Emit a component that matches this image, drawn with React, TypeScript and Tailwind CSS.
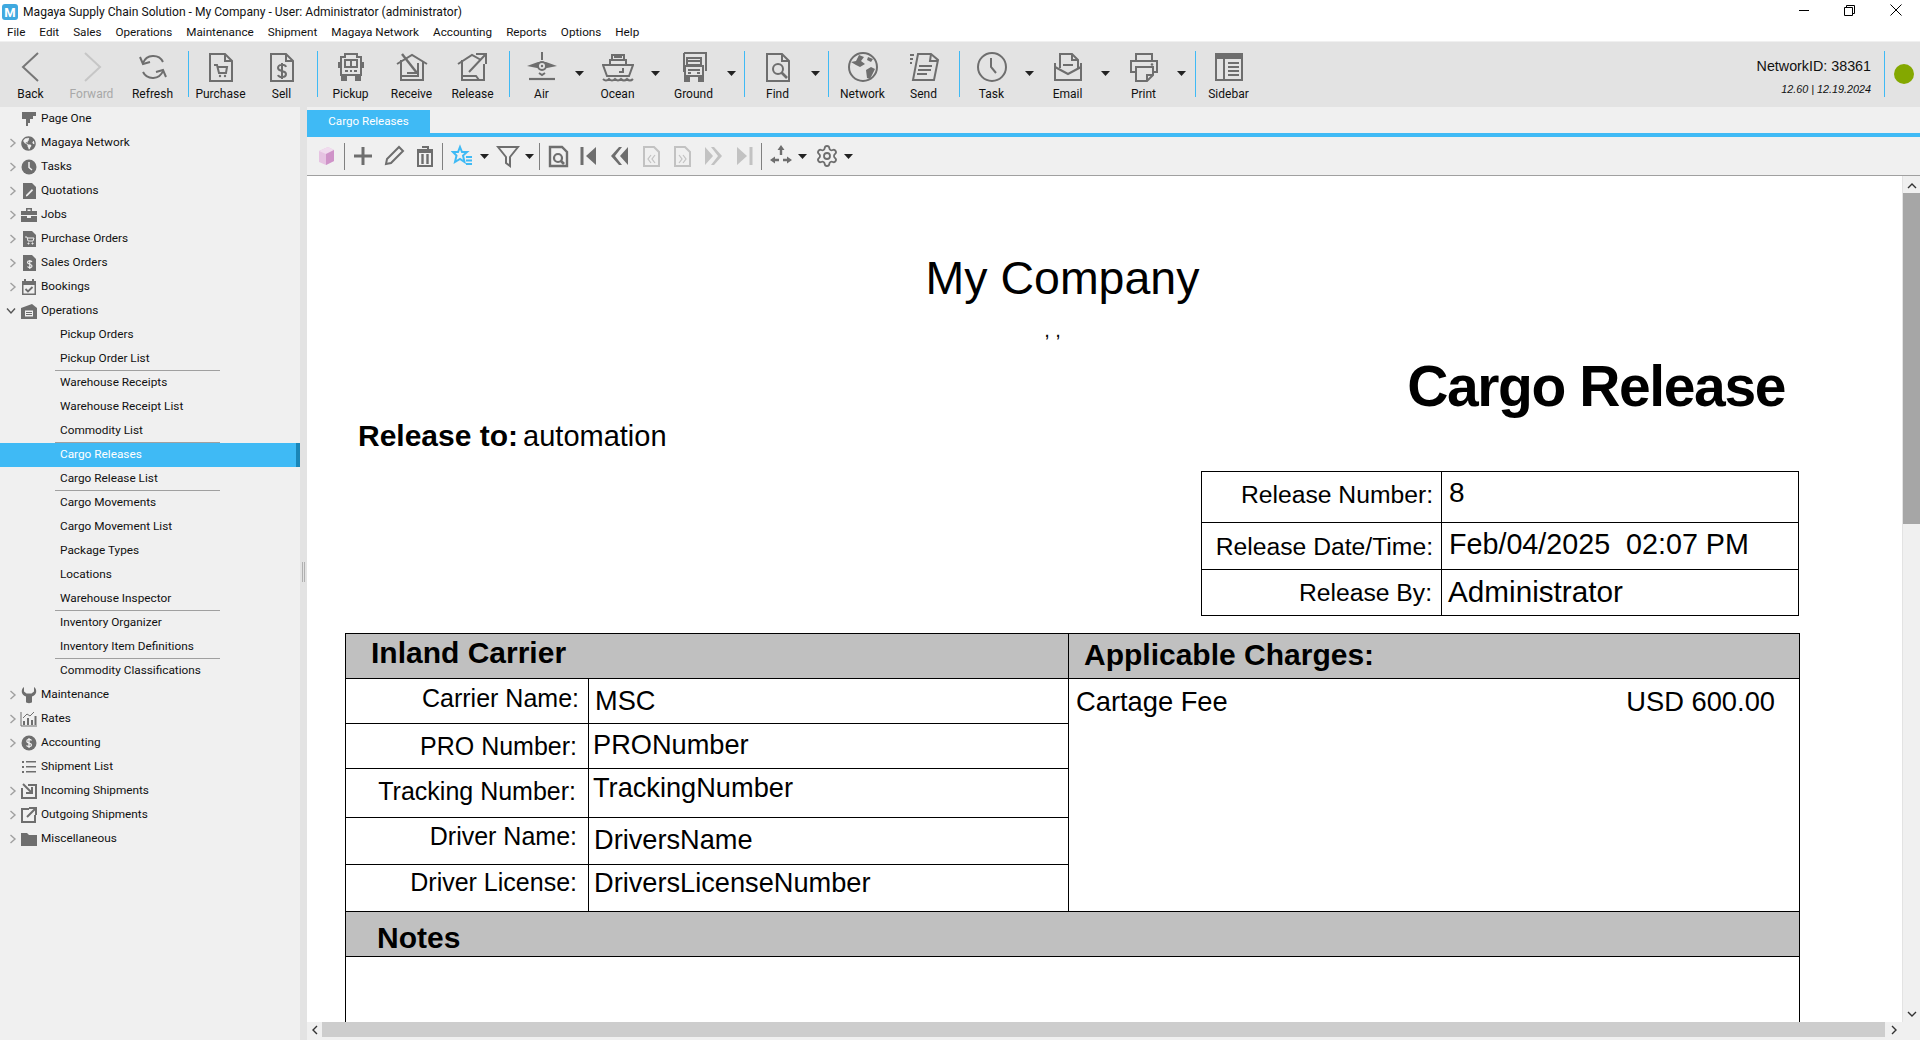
import React from 'react';
import { Settings } from 'lucide-react';
import { FaGlobeAmericas } from 'react-icons/fa';

const GRAY = '#6e6e6e';

function Big({ children, color = GRAY }: { children: React.ReactNode; color?: string }) {
  return (
    <svg width="32" height="32" viewBox="0 0 32 32" fill="none" stroke={color} strokeWidth="2" strokeLinejoin="miter">
      {children}
    </svg>
  );
}

const Page = () => <path d="M5 3H20L27 10V30H5ZM20 3V10H27" />;

const bigIcons: Record<string, React.ReactNode> = {
  back: <Big color="#777"><path d="M23 2L8 16L23 30" /></Big>,
  forward: <Big color="#c6c6c6"><path d="M9 2L24 16L9 30" /></Big>,
  refresh: (
    <Big>
      <path d="M6 12A11 11 0 0 1 26 11" />
      <path d="M3 6L6 13L13 11" />
      <path d="M26 20A11 11 0 0 1 6 21" />
      <path d="M29 26L26 19L19 21" />
    </Big>
  ),
  purchase: (
    <Big>
      <Page />
      <path d="M9 14H12L14 22H21L22 16H13" />
      <circle cx="15" cy="25" r="1.2" fill={GRAY} stroke="none" />
      <circle cx="20" cy="25" r="1.2" fill={GRAY} stroke="none" />
    </Big>
  ),
  sell: (
    <Big>
      <Page />
      <path d="M20 16C19 13 12 13 12 17C12 21 20 19 20 23C20 27 13 27 12 24M16 12V28" />
    </Big>
  ),
  pickup: (
    <Big>
      <path d="M10 3H22V6H26V24H6V6H10Z" />
      <path d="M10 9H22V16H10ZM16 9V16" />
      <path d="M10 20H13M15 20H17M19 20H22" />
      <path d="M7 25H11V29H7ZM21 25H25V29H21Z" fill={GRAY} />
      <path d="M3 11H5V17H3ZM27 11H29V17H27Z" fill={GRAY} stroke="none" />
    </Big>
  ),
  receive: (
    <Big>
      <path d="M1 13L16 4L31 13" />
      <path d="M5 9V29H27V10" />
      <path d="M6 25H22V14" />
      <path d="M6 3L21 22" strokeWidth="2.4" />
      <path d="M11 22H22V12" />
    </Big>
  ),
  release: (
    <Big>
      <path d="M1 13L15 4L24 9" />
      <path d="M5 9V29H27V13" />
      <path d="M5 25H19L22 29" />
      <path d="M12 21L28 4M19 3H29V13" />
    </Big>
  ),
  air: (
    <Big>
      <path d="M16 1V9" />
      <path d="M1 15L12 11H20L31 15L21 17H11Z" fill={GRAY} stroke="none" />
      <circle cx="16" cy="15" r="4" fill="#e3e3e3" />
      <circle cx="16" cy="15" r="1.2" fill={GRAY} stroke="none" />
      <path d="M13 22L16 24L19 22" />
      <path d="M3 28H29" strokeWidth="2.2" />
    </Big>
  ),
  ocean: (
    <Big>
      <path d="M10 9V4H22V9M8 14V9H24V14" />
      <path d="M1 14H31L27 25H5Z" />
      <path d="M12 6H20" />
      <path d="M21 17V21H17" />
      <path d="M1 28C3 30 5 30 7 28C9 30 11 30 13 28C15 30 17 30 19 28C21 30 23 30 25 28C27 30 29 30 31 28" />
    </Big>
  ),
  ground: (
    <Big>
      <path d="M6 2H28V20M6 2V21" />
      <path d="M9 7H23V14H9ZM9 10H23" />
      <path d="M7 15H25V25H7Z" />
      <path d="M10 19H22M10 22H13M19 22H22" />
      <path d="M7 26H11V30H7ZM21 26H25V30H21Z" fill={GRAY} />
    </Big>
  ),
  find: (
    <Big>
      <Page />
      <circle cx="16" cy="18" r="5" />
      <path d="M19.5 21.5L25 27" strokeWidth="2.6" />
    </Big>
  ),
  network: (
    <Big>
      <circle cx="16" cy="16" r="14" />
      <path d="M4 11L9 10L12 4L17 6L14 10L18 13L13 16L9 14ZM19 19L24 16L28 18L23 28L20 27Z" fill={GRAY} stroke="none" />
      <path d="M21 6L26 8L24 11L20 9Z" fill={GRAY} stroke="none" />
    </Big>
  ),
  send: (
    <Big>
      <path d="M10 3H23L30 9L26 29H5Z" />
      <path d="M23 3L22 10H30" />
      <path d="M11 15H24M10 19H23M9 23H19" />
      <path d="M2 4H6M2 8H5M2 12H4" />
    </Big>
  ),
  task: (
    <Big>
      <circle cx="16" cy="16" r="14" />
      <path d="M15 7V16L20 22" />
    </Big>
  ),
  email: (
    <Big>
      <path d="M8 17V3H20L26 9V17" />
      <path d="M20 3V9H26" />
      <path d="M3 12V29H29V12" />
      <path d="M3 16L16 23L29 16" />
      <path d="M11 14H21" />
    </Big>
  ),
  print: (
    <Big>
      <path d="M8 10V3H24V10" />
      <path d="M8 21H3V10H29V21H25" />
      <path d="M8 16H25V24L19 30H8Z" />
      <path d="M19 30V24H25" />
      <circle cx="24" cy="13.5" r="1.3" fill={GRAY} stroke="none" />
    </Big>
  ),
  sidebar: (
    <Big>
      <path d="M3 3H29V29H3Z" />
      <path d="M3 3H29V7H3Z" fill={GRAY} />
      <path d="M11 7V29M15 12H26M15 16H26M15 20H26M15 24H26" />
    </Big>
  ),
};

function Small({ children }: { children: React.ReactNode }) {
  return (
    <svg width="18" height="18" viewBox="0 0 18 18" fill={GRAY} className="shrink-0">
      {children}
    </svg>
  );
}

const sideIcons: Record<string, React.ReactNode> = {
  page: <Small><path d="M2 2H16V6H13V9H10V13H8V16H6V9H2Z" /></Small>,
  globe: <FaGlobeAmericas size={15} color={GRAY} className="mx-[1px]" />,
  clock: (
    <Small>
      <circle cx="9" cy="9" r="7.5" />
      <path d="M9 4V9.5L12 12" stroke="#f0f0f0" strokeWidth="1.5" fill="none" />
    </Small>
  ),
  quote: (
    <Small>
      <path d="M3 1H12L16 5V17H3Z" />
      <path d="M6 13L12 7L13 8.5L7.5 14L6 14.5Z" fill="#f0f0f0" />
    </Small>
  ),
  jobs: (
    <Small>
      <path d="M6 5V2H12V5H17V9H1V5ZM7.5 3.5V5H10.5V3.5ZM1 10H7V12H11V10H17V16H1Z" fillRule="evenodd" />
    </Small>
  ),
  po: (
    <Small>
      <path d="M3 1H12L16 5V17H3Z" />
      <path d="M5 7H7L8 11H13L14 8H7.5M8 13H9V14H8ZM12 13H13V14H12Z" fill="none" stroke="#f0f0f0" />
    </Small>
  ),
  so: (
    <Small>
      <path d="M3 1H12L16 5V17H3Z" />
      <path d="M12 8C11 6.5 7.5 6.5 7.5 8.5C7.5 10.5 12 10 12 12C12 14 8.5 14 7.5 12.5M9.8 6V15" fill="none" stroke="#f0f0f0" strokeWidth="1.2" />
    </Small>
  ),
  book: (
    <Small>
      <path d="M2 3H4V1H6V3H12V1H14V3H16V17H2Z" />
      <path d="M3.5 7H14.5V15.5H3.5Z" fill="#f0f0f0" />
      <path d="M5.5 11L8 13.5L12.5 9" fill="none" stroke={GRAY} strokeWidth="1.8" />
    </Small>
  ),
  ops: (
    <Small>
      <path d="M1 6L12 2L17 6V17H1Z" />
      <path d="M5 8.5H13V14.5H5Z" fill="#f0f0f0" />
      <path d="M6 10.5H12M6 12.5H12" stroke={GRAY} fill="none" />
    </Small>
  ),
  wrench: (
    <Small>
      <path d="M4 1C0.5 3.5 1 9 6 10.5V16C6 17.5 12 17.5 12 16V10.5C17 9 17.5 3.5 14 1V5.5L11.5 7.5H6.5L4 5.5Z" />
    </Small>
  ),
  rates: (
    <Small>
      <path d="M1 2V16H17" fill="none" stroke={GRAY} />
      <path d="M3 11H5V15H3ZM7 8H9V15H7ZM11 10H13V15H11ZM14.5 6H16.5V15H14.5Z" />
      <path d="M3 8L7 4L10 6L14 2" fill="none" stroke={GRAY} />
    </Small>
  ),
  money: (
    <Small>
      <circle cx="9" cy="9" r="7.5" />
      <path d="M11.5 6.5C10.5 5 6.8 5 6.8 7.3C6.8 9.5 11.5 8.7 11.5 11C11.5 13 7.5 13 6.5 11.5M9 4V14" fill="none" stroke="#f0f0f0" strokeWidth="1.3" />
    </Small>
  ),
  list: (
    <Small>
      <path d="M2 3H4V5H2ZM6 3H16V4.5H6ZM2 8H4V10H2ZM6 8H16V9.5H6ZM2 13H4V15H2ZM6 13H16V14.5H6Z" />
    </Small>
  ),
  incoming: (
    <Small>
      <path d="M2 6V16H16V3H8" fill="none" stroke={GRAY} strokeWidth="2" />
      <path d="M3 2L11 10M6 11H12V5" fill="none" stroke={GRAY} strokeWidth="2" />
    </Small>
  ),
  outgoing: (
    <Small>
      <path d="M9 3H2V16H15V9" fill="none" stroke={GRAY} strokeWidth="2" />
      <path d="M7 11L15 3M9 2H16V9" fill="none" stroke={GRAY} strokeWidth="2" />
    </Small>
  ),
  folder: <Small><path d="M1 3H7L9 5H17V16H1Z" /></Small>,
};

const tools = [
  { t: 'b', icon: 'back', label: 'Back' },
  { t: 'b', icon: 'forward', label: 'Forward', dim: true },
  { t: 'b', icon: 'refresh', label: 'Refresh' },
  { t: 's', cls: 'ml-[5px] mr-[1px]' },
  { t: 'b', icon: 'purchase', label: 'Purchase' },
  { t: 'b', icon: 'sell', label: 'Sell' },
  { t: 's', cls: 'ml-[5px] mr-[2px]' },
  { t: 'b', icon: 'pickup', label: 'Pickup' },
  { t: 'b', icon: 'receive', label: 'Receive' },
  { t: 'b', icon: 'release', label: 'Release' },
  { t: 's', cls: 'ml-[6px] mr-[1px]' },
  { t: 'b', icon: 'air', label: 'Air' },
  { t: 'c' },
  { t: 'b', icon: 'ocean', label: 'Ocean' },
  { t: 'c' },
  { t: 'b', icon: 'ground', label: 'Ground' },
  { t: 'c' },
  { t: 's', cls: 'ml-[5px] mr-[2px]' },
  { t: 'b', icon: 'find', label: 'Find' },
  { t: 'c' },
  { t: 's', cls: 'ml-[5px] mr-[3px]' },
  { t: 'b', icon: 'network', label: 'Network' },
  { t: 'b', icon: 'send', label: 'Send' },
  { t: 's', cls: 'ml-[5px] mr-[1px]' },
  { t: 'b', icon: 'task', label: 'Task' },
  { t: 'c' },
  { t: 'b', icon: 'email', label: 'Email' },
  { t: 'c' },
  { t: 'b', icon: 'print', label: 'Print' },
  { t: 'c' },
  { t: 's', cls: 'ml-[6px] mr-[2px]' },
  { t: 'b', icon: 'sidebar', label: 'Sidebar' },
];

const tree = [
  { label: 'Page One', icon: 'page' },
  { label: 'Magaya Network', icon: 'globe', arrow: 'closed' },
  { label: 'Tasks', icon: 'clock', arrow: 'closed' },
  { label: 'Quotations', icon: 'quote', arrow: 'closed' },
  { label: 'Jobs', icon: 'jobs', arrow: 'closed' },
  { label: 'Purchase Orders', icon: 'po', arrow: 'closed' },
  { label: 'Sales Orders', icon: 'so', arrow: 'closed' },
  { label: 'Bookings', icon: 'book', arrow: 'closed' },
  { label: 'Operations', icon: 'ops', arrow: 'open' },
  { label: 'Pickup Orders' },
  { label: 'Pickup Order List', line: true },
  { label: 'Warehouse Receipts' },
  { label: 'Warehouse Receipt List' },
  { label: 'Commodity List', line: true },
  { label: 'Cargo Releases', selected: true },
  { label: 'Cargo Release List', line: true },
  { label: 'Cargo Movements' },
  { label: 'Cargo Movement List' },
  { label: 'Package Types' },
  { label: 'Locations' },
  { label: 'Warehouse Inspector', line: true },
  { label: 'Inventory Organizer' },
  { label: 'Inventory Item Definitions', line: true },
  { label: 'Commodity Classifications' },
  { label: 'Maintenance', icon: 'wrench', arrow: 'closed' },
  { label: 'Rates', icon: 'rates', arrow: 'closed' },
  { label: 'Accounting', icon: 'money', arrow: 'closed' },
  { label: 'Shipment List', icon: 'list' },
  { label: 'Incoming Shipments', icon: 'incoming', arrow: 'closed' },
  { label: 'Outgoing Shipments', icon: 'outgoing', arrow: 'closed' },
  { label: 'Miscellaneous', icon: 'folder', arrow: 'closed' },
];

const menus = ['File', 'Edit', 'Sales', 'Operations', 'Maintenance', 'Shipment', 'Magaya Network', 'Accounting', 'Reports', 'Options', 'Help'];

function Caret({ className = '' }: { className?: string }) {
  return (
    <svg width="9" height="5" viewBox="0 0 9 5" className={className}>
      <path d="M0 0H9L4.5 5Z" fill="#222" />
    </svg>
  );
}

function Toolbar() {
  return (
    <div className="flex h-[65px] bg-[#e3e3e3] items-start">
      {tools.map((item, i) => {
        if (item.t === 's') return <div key={i} className={`w-px h-[46px] mt-[9px] bg-[#3fbaf5] ${item.cls}`} />;
        if (item.t === 'c')
          return (
            <div key={i} className="w-[15px] flex justify-center mt-[29px]">
              <Caret />
            </div>
          );
        return (
          <div key={i} className="w-[61px] flex flex-col items-center pt-[9px]">
            {bigIcons[item.icon as string]}
            <span className={`mt-[3px] text-[12px] leading-[16px] ${item.dim ? 'text-[#a8a8a8]' : 'text-[#111]'}`}>{item.label}</span>
          </div>
        );
      })}
      <div className="ml-auto flex flex-col items-end mr-[13px] font-['Liberation_Sans',Arial,sans-serif] text-[#111]">
        <span className="text-[14.3px] leading-[16px] mt-[16px]">NetworkID: 38361</span>
        <span className="text-[10.8px] leading-[14px] italic mt-[8px]">12.60 | 12.19.2024</span>
      </div>
      <div className="w-px h-[46px] mt-[9px] bg-[#3fbaf5]" />
      <div className="w-[20px] h-[20px] rounded-full bg-[#84a800] mt-[22px] ml-[9px] mr-[6px]" />
    </div>
  );
}

function Sidebar() {
  return (
    <div className="w-[300px] shrink-0 bg-[#f0f0f0] text-[11.8px] text-[#111]">
      {tree.map((row) => (
        <div key={row.label} className={`relative h-[24px] flex items-center ${row.selected ? 'bg-[#3fbaf5] text-white border-r-4 border-[#1a86b8]' : ''}`}>
          {row.icon ? (
            <>
              <div className="w-[18px] flex justify-end pr-[1px] shrink-0">
                {row.arrow === 'closed' && (
                  <svg width="8" height="10" viewBox="0 0 8 10" fill="none" stroke="#a0a0a0" strokeWidth="1.4">
                    <path d="M1.5 1L6 5L1.5 9" />
                  </svg>
                )}
                {row.arrow === 'open' && (
                  <svg width="10" height="8" viewBox="0 0 10 8" fill="none" stroke="#555" strokeWidth="1.4" className="mr-[1px]">
                    <path d="M1 1.5L5 6L9 1.5" />
                  </svg>
                )}
              </div>
              <div className="w-[21px] mr-[2px] flex justify-center shrink-0">{sideIcons[row.icon]}</div>
              <span>{row.label}</span>
            </>
          ) : (
            <span className="pl-[60px]">{row.label}</span>
          )}
          {row.line && <div className="absolute left-[55px] bottom-0 w-[165px] h-px bg-[#a0a0a0]" />}
        </div>
      ))}
    </div>
  );
}

function Tool({ children, faded }: { children: React.ReactNode; faded?: boolean }) {
  return (
    <div className={`w-[31px] flex justify-center ${faded ? 'opacity-35' : ''}`}>
      <svg width="24" height="24" viewBox="0 0 24 24" fill="none" stroke={GRAY} strokeWidth="2">
        {children}
      </svg>
    </div>
  );
}

function ActionBar() {
  const sep = 'w-px h-[27px] bg-[#808080]';
  const caret = 'w-[12px] flex justify-center';
  return (
    <div className="flex items-center h-[38px] bg-[#f0f0f0] border-b border-[#a0a0a0] box-content pl-[3px]">
      <Tool>
        <path d="M5 7L14 3L20 6V17L12 21L5 18Z" fill="#e6c3e2" stroke="none" />
        <path d="M5 7L12 10L20 6L14 3Z" fill="#f0dcee" stroke="none" />
        <path d="M12 10V21L20 17V6Z" fill="#cf93c8" stroke="none" />
      </Tool>
      <div className={`${sep} ml-[3px] mr-[2px]`} />
      <Tool><path d="M12 3V21M3 12H21" strokeWidth="3" /></Tool>
      <Tool><path d="M4 20L5 15L17 3L21 7L9 19Z" /></Tool>
      <Tool>
        <path d="M4 6H20M9 3H15V6" strokeWidth="2" />
        <path d="M5 8H19V22H5Z" />
        <path d="M9.5 10V20M14.5 10V20" strokeWidth="2.4" />
      </Tool>
      <div className={`${sep} ml-[2px] mr-[4px]`} />
      <Tool>
        <path d="M9 3L11 8H16L12 11.5L13.5 18L9 15L4 18L5.5 11.5L2 8H7Z" stroke="#3fbaf5" />
        <path d="M15 13H21M15 16.5H21M15 20H21" stroke="#3fbaf5" />
      </Tool>
      <div className={caret}><Caret /></div>
      <div className="w-[2px]" />
      <Tool><path d="M2 3H22L14 13V22L10 19V13Z" /></Tool>
      <div className={caret}><Caret /></div>
      <div className={`${sep} ml-[4px] mr-[2px]`} />
      <Tool>
        <path d="M4 3H16L21 8V22H4Z" strokeWidth="2.4" />
        <circle cx="12" cy="14" r="4" strokeWidth="2.2" />
        <path d="M15 17L18 20" strokeWidth="2.6" />
      </Tool>
      <Tool><path d="M5 3V21" strokeWidth="3" /><path d="M19 3L9 12L19 21Z" fill={GRAY} stroke="none" /></Tool>
      <Tool><path d="M11 3L3 12L11 21H14L7 12L14 3ZM20 3L12 12L20 21V3Z" fill={GRAY} stroke="none" /></Tool>
      <Tool faded>
        <path d="M5 3H15L20 8V22H5Z" />
        <path d="M12 11L9 15L12 19M16 11L13 15L16 19" strokeWidth="1.2" />
      </Tool>
      <Tool faded>
        <path d="M5 3H15L20 8V22H5Z" />
        <path d="M9 11L12 15L9 19M13 11L16 15L13 19" strokeWidth="1.2" />
      </Tool>
      <Tool faded><path d="M13 3L21 12L13 21H10L17 12L10 3ZM4 3L12 12L4 21V3Z" fill={GRAY} stroke="none" /></Tool>
      <Tool faded><path d="M19 3V21" strokeWidth="3" /><path d="M5 3L15 12L5 21Z" fill={GRAY} stroke="none" /></Tool>
      <div className={`${sep} ml-[2px] mr-[3px]`} />
      <Tool>
        <path d="M12 4V11M5 16H10M14 16H19" strokeWidth="2.4" />
        <path d="M12 1L15.5 6H8.5ZM1 16L6 12.5V19.5ZM23 16L18 12.5V19.5Z" fill={GRAY} stroke="none" />
      </Tool>
      <div className={caret}><Caret /></div>
      <div className="w-[3px]" />
      <div className="w-[31px] flex justify-center"><Settings size={24} color={GRAY} strokeWidth={1.8} /></div>
      <div className={caret}><Caret /></div>
    </div>
  );
}

function ReleaseRow({ label, value, h, labelCls, valueCls, last }: { label: string; value: string; h: string; labelCls: string; valueCls: string; last?: boolean }) {
  return (
    <div className={`flex ${h} ${last ? '' : 'border-b border-black'}`}>
      <div className={`w-[240px] shrink-0 border-r border-black text-right text-[24.7px] leading-none ${labelCls}`}>{label}</div>
      <div className={`flex-1 leading-none whitespace-pre ${valueCls}`}>{value}</div>
    </div>
  );
}

function CarrierRow({ label, value, h, labelCls, valueCls, last }: { label: string; value: string; h: string; labelCls: string; valueCls: string; last?: boolean }) {
  return (
    <div className={`flex ${h} ${last ? '' : 'border-b border-black'}`}>
      <div className={`w-[243px] shrink-0 border-r border-black text-right text-[25px] leading-none ${labelCls}`}>{label}</div>
      <div className={`flex-1 text-[27.2px] leading-none ${valueCls}`}>{value}</div>
    </div>
  );
}

function Report() {
  return (
    <div className="w-[1455px] ml-[38px] font-['Liberation_Sans',Arial,sans-serif] text-black">
      <div className="pt-[79px] pr-[20px] text-center text-[46.5px] leading-none">My Company</div>
      <div className="mt-[18px] pr-[40px] text-center text-[20px] leading-none">, ,</div>
      <div className="mt-[18px] pr-[15px] text-right text-[57px] leading-none font-bold tracking-[-1.4px]">Cargo Release</div>
      <div className="mt-[6px] pl-[13px] flex items-baseline gap-[5px]">
        <span className="text-[30px] leading-none font-bold">Release to:</span>
        <span className="text-[29px] leading-none">automation</span>
      </div>
      <div className="mt-[20px] ml-[856px] w-[598px] border border-black">
        <ReleaseRow label="Release Number:" value="8" h="h-[51px]" labelCls="pt-[11px] pr-[8px]" valueCls="text-[28px] pt-[7px] pl-[7px]" />
        <ReleaseRow label="Release Date/Time:" value="Feb/04/2025  02:07 PM" h="h-[47px]" labelCls="pt-[12px] pr-[8px]" valueCls="text-[28.7px] pt-[7px] pl-[7px]" />
        <ReleaseRow label="Release By:" value="Administrator" h="h-[45px]" labelCls="pt-[11px] pr-[9px]" valueCls="text-[29.7px] pt-[7px] pl-[6px]" last />
      </div>
      <div className="mt-[17px] border-x border-t border-black">
        <div className="flex h-[45px] bg-[#c0c0c0] border-b border-black text-[30px] leading-none font-bold">
          <div className="w-[723px] shrink-0 border-r border-black pl-[25px] pt-[4px]">Inland Carrier</div>
          <div className="flex-1 pl-[15px] pt-[6px]">Applicable Charges:</div>
        </div>
        <div className="flex border-b border-black">
          <div className="w-[723px] shrink-0 border-r border-black">
            <CarrierRow label="Carrier Name:" value="MSC" h="h-[45px]" labelCls="pt-[7px] pr-[9px]" valueCls="pt-[8px] pl-[6px]" />
            <CarrierRow label="PRO Number:" value="PRONumber" h="h-[45px]" labelCls="pt-[10px] pr-[11px]" valueCls="pt-[7px] pl-[4px]" />
            <CarrierRow label="Tracking Number:" value="TrackingNumber" h="h-[49px]" labelCls="pt-[10px] pr-[12px]" valueCls="pt-[5px] pl-[4px]" />
            <CarrierRow label="Driver Name:" value="DriversName" h="h-[47px]" labelCls="pt-[6px] pr-[11px]" valueCls="pt-[8px] pl-[5px]" />
            <CarrierRow label="Driver License:" value="DriversLicenseNumber" h="h-[46px]" labelCls="pt-[5px] pr-[11px]" valueCls="pt-[4px] pl-[5px]" last />
          </div>
          <div className="flex-1 flex justify-between text-[27.3px] leading-none pt-[9px] pl-[7px] pr-[24px]">
            <span>Cartage Fee</span>
            <span>USD 600.00</span>
          </div>
        </div>
        <div className="h-[45px] bg-[#c0c0c0] border-b border-black text-[30px] leading-none font-bold pl-[31px] pt-[11px]">Notes</div>
        <div className="h-[200px]" />
      </div>
    </div>
  );
}

export default function App() {
  return (
    <div className="w-[1920px] h-[1040px] overflow-hidden flex flex-col bg-white font-['Roboto',sans-serif]">
      {/* Title bar */}
      <div className="h-[24px] flex items-center relative">
        <div className="w-[16px] h-[16px] ml-[2px] rounded-[3px] bg-[#3fa9e0] text-white text-[13px] font-bold flex items-center justify-center leading-none">M</div>
        <span className="ml-[5px] text-[12.1px] text-[#111]">Magaya Supply Chain Solution - My Company - User: Administrator (administrator)</span>
        <div className="absolute right-[18px] top-[4px] flex items-center gap-[35px]">
          <div className="w-[10px] h-px bg-black" />
          <svg width="11" height="11" viewBox="0 0 11 11" fill="none" stroke="#000">
            <path d="M2.5 2.5V0.5H10.5V8.5H8.5M0.5 2.5H8.5V10.5H0.5Z" />
          </svg>
          <svg width="12" height="12" viewBox="0 0 12 12" fill="none" stroke="#000">
            <path d="M0.5 0.5L11.5 11.5M11.5 0.5L0.5 11.5" />
          </svg>
        </div>
      </div>
      {/* Menu */}
      <div className="h-[18px] flex items-center gap-[14px] pl-[7px] text-[11.7px] text-[#111] border-b border-[#f0f0f0]">
        {menus.map((m) => (
          <span key={m}>{m}</span>
        ))}
      </div>
      <Toolbar />
      <div className="flex flex-1 min-h-0">
        <Sidebar />
        <div className="w-[7px] shrink-0 bg-[#e3e3e3] flex justify-center pt-[455px]">
          <div className="w-[3px] h-[20px] border-x border-[#b0b0b0]" />
        </div>
        <div className="flex-1 min-w-0 flex flex-col">
          <div className="h-[26px] bg-[#f0f0f0] flex items-end pt-[3px]">
            <div className="w-[123px] h-[23px] bg-[#3fbaf5] text-white text-[11.6px] flex items-center justify-center">Cargo Releases</div>
          </div>
          <div className="h-[4px] bg-[#3fbaf5]" />
          <ActionBar />
          <div className="flex flex-1 min-h-0">
            <div className="flex-1 min-w-0 overflow-hidden bg-white">
              <Report />
            </div>
            <div className="w-[18px] shrink-0 bg-[#f0f0f0] border-l border-[#e3e3e3] flex flex-col items-center">
              <svg width="10" height="6" viewBox="0 0 10 6" fill="none" stroke="#333" strokeWidth="1.4" className="mt-[7px]">
                <path d="M1 5L5 1L9 5" />
              </svg>
              <div className="w-[17px] h-[331px] bg-[#a6a6a6] mt-[4px]" />
              <svg width="10" height="6" viewBox="0 0 10 6" fill="none" stroke="#333" strokeWidth="1.4" className="mt-auto mb-[5px]">
                <path d="M1 1L5 5L9 1" />
              </svg>
            </div>
          </div>
          <div className="h-[18px] shrink-0 bg-[#f0f0f0] flex items-start">
            <div className="w-[15px] h-[15px] flex items-center justify-center">
              <svg width="6" height="10" viewBox="0 0 6 10" fill="none" stroke="#333" strokeWidth="1.4">
                <path d="M5 1L1 5L5 9" />
              </svg>
            </div>
            <div className="flex-1 h-[15px] bg-[#cdcdcd]" />
            <div className="w-[17px] h-[15px] flex items-center justify-center">
              <svg width="6" height="10" viewBox="0 0 6 10" fill="none" stroke="#333" strokeWidth="1.4">
                <path d="M1 1L5 5L1 9" />
              </svg>
            </div>
            <div className="w-[18px]" />
          </div>
        </div>
      </div>
    </div>
  );
}
